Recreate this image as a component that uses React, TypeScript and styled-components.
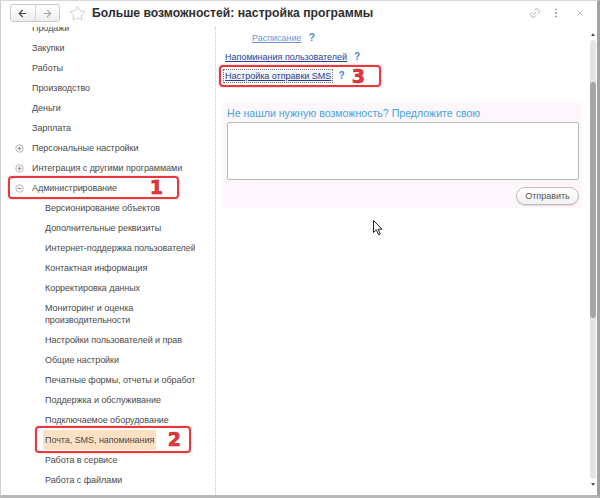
import styled, { createGlobalStyle } from "styled-components";
import { ArrowLeft, ArrowRight, Star, Link2, MoreVertical, X } from "lucide-react";

const Global = createGlobalStyle`
  html, body { margin:0; padding:0; background:#fff; }
  body { font-family:"Liberation Sans", Arial, sans-serif; }
`;

const Window = styled.div`
  width:600px;
  height:498px;
  box-sizing:border-box;
  border-left:1px solid #d0d0d0;
  border-top:1px solid #d8d8d8;
  border-right:3px solid #a2a2a2;
  border-bottom:3px solid #b8b8b8;
  background:#fff;
  display:flex;
  flex-direction:column;
  overflow:hidden;
`;

const Header = styled.div`
  height:26px;
  flex:none;
  display:flex;
  align-items:center;
  padding-left:9px;
  padding-right:12px;
`;

const NavGroup = styled.div`
  display:flex;
  width:50px;
  height:18px;
  box-sizing:border-box;
  border:1px solid #c9c9c9;
  border-radius:3px;
  background:linear-gradient(#ffffff,#eeeeee);
  margin-top:-2px;
`;

const NavButton = styled.div<{ $disabled?: boolean }>`
  flex:1;
  display:flex;
  align-items:center;
  justify-content:center;
  color:${p => (p.$disabled ? "#9a9a9a" : "#4a4a4a")};
  & + & { border-left:1px solid #d6d6d6; }
`;

const StarBox = styled.div`
  margin-left:9px;
  margin-top:-2px;
  display:flex;
  color:#c4c4c4;
`;

const Title = styled.h1`
  margin:-2px 0 0 6px;
  font-size:12.2px;
  font-weight:bold;
  color:#2e2e2e;
  flex:1;
`;

const HeaderTools = styled.div`
  display:flex;
  align-items:center;
  gap:9px;
  color:#a8a8a8;
  margin-top:-2px;
`;

const Body = styled.div`
  flex:1;
  display:flex;
  min-height:0;
`;

const Tree = styled.div`
  width:214px;
  flex:none;
  border-right:1px dotted #c4c4c4;
  overflow:hidden;
  font-size:9px;
  letter-spacing:-0.05px;
  color:#4a4a4a;
`;

const TreeList = styled.div`
  margin-top:-9px;
`;

const Row = styled.div<{ $level: number }>`
  position:relative;
  display:flex;
  align-items:center;
  padding-left:${p => (p.$level === 0 ? 14 : 42)}px;
  padding-right:20px;
`;

const Toggle = styled.span`
  width:15px;
  flex:none;
  display:flex;
  align-items:center;
`;

const Label = styled.span<{ $selected?: boolean; $wrap?: boolean }>`
  padding:4px 2px;
  line-height:12px;
  white-space:${p => (p.$wrap ? "normal" : "nowrap")};
  overflow:hidden;
  min-width:0;
  max-width:${p => (p.$wrap ? "120px" : "none")};
  background:${p => (p.$selected ? "#fde1c2" : "transparent")};
`;

const Callout = styled.span<{ $l: number; $t: number; $w: number; $h: number }>`
  position:absolute;
  left:${p => p.$l}px;
  top:${p => p.$t}px;
  width:${p => p.$w}px;
  height:${p => p.$h}px;
  box-sizing:border-box;
  border:2px solid #e8373d;
  border-radius:4px;
  box-shadow:0 0 2px rgba(200,0,0,0.35);
  display:flex;
  align-items:center;
  justify-content:flex-end;
  padding-right:${p => (p.$w > 160 ? 14 : 8)}px;
  pointer-events:none;
`;

const Num = styled.span`
  font-family:"DejaVu Sans", "Liberation Sans", sans-serif;
  font-weight:bold;
  font-size:19px;
  line-height:19px;
  color:#e8373d;
  -webkit-text-stroke:0.6px #b51f25;
  text-shadow:0 0 1px #fff;
`;

const Main = styled.div`
  position:relative;
  flex:1;
  padding:1px 6px 0 7px;
  font-size:9px;
`;

const LinkRow = styled.div<{ $indent?: number }>`
  position:relative;
  height:19px;
  display:flex;
  align-items:center;
  gap:7px;
  padding-left:${p => p.$indent ?? 2}px;
`;

const Link = styled.a<{ $muted?: boolean; $focused?: boolean }>`
  color:${p => (p.$muted ? "#7294d0" : "#253f94")};
  text-decoration:underline;
  cursor:pointer;
  outline:${p => (p.$focused ? "1px dotted #6a6a6a" : "none")};
  outline-offset:1px;
  background:${p => (p.$focused ? "#f2f4f8" : "transparent")};
`;

const Help = styled.span`
  color:#3f86d6;
  font-weight:bold;
  font-size:10px;
`;

const Suggest = styled.div`
  margin-top:18px;
  background:#fdf7fc;
  padding:3px 3px 3px 4px;
  display:flex;
  flex-direction:column;
`;

const SuggestTitle = styled.div`
  font-size:10.6px;
  line-height:14px;
  color:#45a3dc;
`;

const TextBox = styled.textarea`
  margin-top:2px;
  height:58px;
  box-sizing:border-box;
  border:1px solid #b9b9b9;
  border-radius:2px;
  background:#fff;
  resize:none;
  outline:none;
`;

const SendButton = styled.button`
  align-self:flex-end;
  margin-top:7px;
  height:18px;
  width:63px;
  border:1px solid #bdbdbd;
  border-radius:9px;
  background:linear-gradient(#ffffff,#f1f1f1);
  box-shadow:0 1px 1px rgba(0,0,0,0.12);
  font-family:"Liberation Sans", Arial, sans-serif;
  font-size:9px;
  color:#555;
  padding:0;
`;

const Pointer = styled.svg`
  position:absolute;
  left:157px;
  top:193px;
`;

const Scroll = styled.div`
  width:9px;
  flex:none;
  display:flex;
  flex-direction:column;
  align-items:center;
  padding:6px 0 9px;
`;

const Arrow = styled.span<{ $down?: boolean }>`
  width:0;
  height:0;
  border-left:2.5px solid transparent;
  border-right:2.5px solid transparent;
  ${p => (p.$down ? "border-top:3px solid #555;" : "border-bottom:3px solid #555;")}
`;

const Track = styled.div`
  flex:1;
  width:6px;
  margin:4px 0;
  background:#e4e4e4;
  border-radius:3px;
`;

const Thumb = styled.div`
  margin-top:42px;
  height:236px;
  background:#a6a6a6;
  border-radius:3px;
`;

type Node = {
  text: string;
  level: number;
  toggle?: "plus" | "minus";
  wrap?: boolean;
  selected?: boolean;
  mark?: number;
};

const nodes: Node[] = [
  { text: "Продажи", level: 0 },
  { text: "Закупки", level: 0 },
  { text: "Работы", level: 0 },
  { text: "Производство", level: 0 },
  { text: "Деньги", level: 0 },
  { text: "Зарплата", level: 0 },
  { text: "Персональные настройки", level: 0, toggle: "plus" },
  { text: "Интеграция с другими программами", level: 0, toggle: "plus" },
  { text: "Администрирование", level: 0, toggle: "minus", mark: 1 },
  { text: "Версионирование объектов", level: 1 },
  { text: "Дополнительные реквизиты", level: 1 },
  { text: "Интернет-поддержка пользователей", level: 1 },
  { text: "Контактная информация", level: 1 },
  { text: "Корректировка данных", level: 1 },
  { text: "Мониторинг и оценка производительности", level: 1, wrap: true },
  { text: "Настройки пользователей и прав", level: 1 },
  { text: "Общие настройки", level: 1 },
  { text: "Печатные формы, отчеты и обработки", level: 1 },
  { text: "Поддержка и обслуживание", level: 1 },
  { text: "Подключаемое оборудование", level: 1 },
  { text: "Почта, SMS, напоминания", level: 1, selected: true, mark: 2 },
  { text: "Работа в сервисе", level: 1 },
  { text: "Работа с файлами", level: 1 },
  { text: "Регламентные операции", level: 1 },
];

function ToggleIcon({ kind }: { kind: "plus" | "minus" }) {
  return (
    <svg width="9" height="9" viewBox="0 0 9 9">
      <circle cx="4.5" cy="4.5" r="3.8" fill="#f4f4f4" stroke="#b0b0b0" strokeWidth="0.8" />
      <line x1="2.6" y1="4.5" x2="6.4" y2="4.5" stroke="#8a8a8a" strokeWidth="0.9" />
      {kind === "plus" && <line x1="4.5" y1="2.6" x2="4.5" y2="6.4" stroke="#8a8a8a" strokeWidth="0.9" />}
    </svg>
  );
}

function App() {
  return (
    <Window>
      <Global />
      <Header>
        <NavGroup>
          <NavButton><ArrowLeft size={11} strokeWidth={2.6} /></NavButton>
          <NavButton $disabled><ArrowRight size={11} strokeWidth={2.2} /></NavButton>
        </NavGroup>
        <StarBox><Star size={17} strokeWidth={1.2} /></StarBox>
        <Title>Больше возможностей: настройка программы</Title>
        <HeaderTools>
          <Link2 size={12} strokeWidth={1.6} style={{ transform: "rotate(-45deg)" }} />
          <MoreVertical size={12} strokeWidth={2} color="#888" />
          <X size={10} strokeWidth={1.6} style={{ marginLeft: 4 }} />
        </HeaderTools>
      </Header>
      <Body>
        <Tree>
          <TreeList>
            {nodes.map(n => (
              <Row key={n.text} $level={n.level}>
                {n.level === 0 && <Toggle>{n.toggle && <ToggleIcon kind={n.toggle} />}</Toggle>}
                <Label $selected={n.selected} $wrap={n.wrap}>{n.text}</Label>
                {n.mark === 1 && (
                  <Callout $l={7} $t={-2} $w={171} $h={23}><Num>1</Num></Callout>
                )}
                {n.mark === 2 && (
                  <Callout $l={34} $t={-4} $w={156} $h={27}><Num>2</Num></Callout>
                )}
              </Row>
            ))}
          </TreeList>
        </Tree>
        <Main>
          <LinkRow $indent={29}>
            <Link $muted>Расписание</Link>
            <Help>?</Help>
          </LinkRow>
          <LinkRow>
            <Link>Напоминания пользователей</Link>
            <Help>?</Help>
          </LinkRow>
          <LinkRow>
            <Link $focused>Настройка отправки SMS</Link>
            <Help>?</Help>
            <Callout $l={-4} $t={-1} $w={162} $h={22}><Num>3</Num></Callout>
          </LinkRow>
          <Suggest>
            <SuggestTitle>Не нашли нужную возможность? Предложите свою</SuggestTitle>
            <TextBox />
            <SendButton>Отправить</SendButton>
          </Suggest>
          <Pointer width="10" height="16" viewBox="0 0 10 16">
            <path d="M0.5 0.5 L0.5 12.5 L3.4 9.8 L5.6 14.8 L7.3 14 L5.2 9.2 L9 9.2 Z" fill="#fff" stroke="#222" strokeWidth="1" strokeLinejoin="round" />
          </Pointer>
        </Main>
        <Scroll>
          <Arrow />
          <Track><Thumb /></Track>
          <Arrow $down />
        </Scroll>
      </Body>
    </Window>
  );
}

export default App;
